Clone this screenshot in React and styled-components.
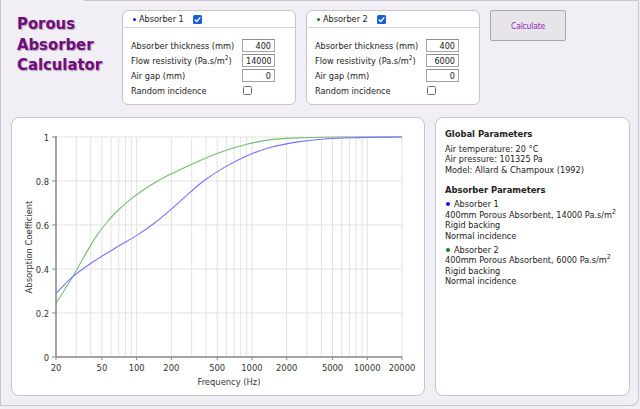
import React from "react";
import styled, { createGlobalStyle } from "styled-components";

const GlobalStyle = createGlobalStyle`
  html, body {
    margin: 0;
    padding: 0;
    background: #f2eef5;
  }
  body {
    font-family: "DejaVu Sans Condensed", "DejaVu Sans", sans-serif;
    font-stretch: condensed;
    color: #222;
  }
`;

const BLUE = "#7373ff";
const GREEN = "#74bb74";

// plot area inside the chart svg
const L = 44;
const R = 390;
const T = 19;
const B = 239;

const fx = (f) => L + ((Math.log10(f) - Math.log10(20)) / 3) * (R - L);
const ay = (a) => B - a * (B - T);

const blueData = [
  [20, 0.289], [27.9, 0.365], [40.2, 0.426], [68.5, 0.502], [102, 0.555],
  [142, 0.608], [199, 0.671], [296, 0.752], [386, 0.802], [576, 0.862],
  [918, 0.916], [1463, 0.953], [2500, 0.978], [4000, 0.99], [8000, 0.997],
  [20000, 1.0],
];

const greenData = [
  [20, 0.244], [27.9, 0.365], [35.2, 0.458], [44.5, 0.547], [54.3, 0.608],
  [64.1, 0.65], [83.6, 0.706], [102, 0.741], [152, 0.8], [212, 0.839],
  [296, 0.874], [504, 0.926], [918, 0.968], [1463, 0.988], [2500, 0.996],
  [4000, 0.999], [6000, 1.0], [20000, 1.0],
];

function monotonePath(data) {
  const pts = data.map(([f, a]) => [fx(f), ay(a)]);
  const n = pts.length;
  const m = [];
  for (let i = 0; i < n - 1; i++) {
    m.push((pts[i + 1][1] - pts[i][1]) / (pts[i + 1][0] - pts[i][0]));
  }
  const t = [m[0]];
  for (let i = 1; i < n - 1; i++) {
    t.push(m[i - 1] * m[i] <= 0 ? 0 : (m[i - 1] + m[i]) / 2);
  }
  t.push(m[n - 2]);
  for (let i = 0; i < n - 1; i++) {
    if (m[i] === 0) {
      t[i] = 0;
      t[i + 1] = 0;
      continue;
    }
    const a = t[i] / m[i];
    const b = t[i + 1] / m[i];
    const s = a * a + b * b;
    if (s > 9) {
      const k = 3 / Math.sqrt(s);
      t[i] = k * a * m[i];
      t[i + 1] = k * b * m[i];
    }
  }
  let d = `M${pts[0][0].toFixed(2)},${pts[0][1].toFixed(2)}`;
  for (let i = 0; i < n - 1; i++) {
    const [x0, y0] = pts[i];
    const [x1, y1] = pts[i + 1];
    const h = (x1 - x0) / 3;
    d += ` C${(x0 + h).toFixed(2)},${(y0 + t[i] * h).toFixed(2)} ${(x1 - h).toFixed(2)},${(y1 - t[i + 1] * h).toFixed(2)} ${x1.toFixed(2)},${y1.toFixed(2)}`;
  }
  return d;
}

const gridFreqs = [];
[10, 100, 1000, 10000].forEach((dec) => {
  for (let k = 1; k <= 9; k++) {
    const f = dec * k;
    if (f >= 20 && f <= 20000) gridFreqs.push(f);
  }
});
const xLabels = [20, 50, 100, 200, 500, 1000, 2000, 5000, 10000, 20000];
const yLabels = [
  [0, "0"], [0.2, "0.2"], [0.4, "0.4"], [0.6, "0.6"], [0.8, "0.8"], [1, "1"],
];

const absorbers = [
  { name: "Absorber 1", color: "#1010f0", thickness: "400", flow: "14000", gap: "0" },
  { name: "Absorber 2", color: "#108010", thickness: "400", flow: "6000", gap: "0" },
];

function Check() {
  return (
    <BlueCheck>
      <svg width="9" height="9" viewBox="0 0 9 9">
        <path d="M1.8 4.6 L3.7 6.4 L7.3 2.4" fill="none" stroke="#fff" strokeWidth="1.4" />
      </svg>
    </BlueCheck>
  );
}

function AbsorberBox({ item }) {
  return (
    <Box>
      <BoxHeader>
        <Dot $color={item.color} />
        <span>{item.name}</span>
        <Check />
      </BoxHeader>
      <BoxBody>
        <Label>Absorber thickness (mm)</Label>
        <NumInput readOnly value={item.thickness} />
        <Label>
          Flow resistivity (Pa.s/m<Sup>2</Sup>)
        </Label>
        <NumInput readOnly value={item.flow} />
        <Label>Air gap (mm)</Label>
        <NumInput readOnly value={item.gap} />
        <Label>Random incidence</Label>
        <EmptyCheck />
      </BoxBody>
    </Box>
  );
}

function Chart() {
  return (
    <svg width="412" height="277" viewBox="0 0 412 277">
      {gridFreqs.map((f) => (
        <line key={f} x1={fx(f)} x2={fx(f)} y1={T} y2={B} stroke="#e2e2e2" strokeWidth="1" />
      ))}
      {yLabels.map(([a]) => (
        <line key={a} x1={L} x2={R} y1={ay(a)} y2={ay(a)} stroke="#e2e2e2" strokeWidth="1" />
      ))}
      <path d={monotonePath(greenData)} fill="none" stroke={GREEN} strokeWidth="1.1" />
      <path d={monotonePath(blueData)} fill="none" stroke={BLUE} strokeWidth="1.1" />
      <line x1={L} x2={L} y1={T - 1} y2={B} stroke="#8a8a8a" strokeWidth="1.5" />
      <line x1={L} x2={R} y1={B} y2={B} stroke="#8a8a8a" strokeWidth="1.5" />
      {yLabels.map(([a, txt]) => (
        <g key={txt}>
          <line x1={L - 4} x2={L} y1={ay(a)} y2={ay(a)} stroke="#8a8a8a" />
          <AxisText x={L - 7} y={ay(a) + 3.5} textAnchor="end">
            {txt}
          </AxisText>
        </g>
      ))}
      {xLabels.map((f) => (
        <g key={f}>
          <line x1={fx(f)} x2={fx(f)} y1={B} y2={B + 3} stroke="#8a8a8a" />
          <AxisText x={fx(f)} y={B + 14} textAnchor="middle">
            {f}
          </AxisText>
        </g>
      ))}
      <AxisText x={(L + R) / 2} y={B + 28} textAnchor="middle">
        Frequency (Hz)
      </AxisText>
      <AxisText x={20} y={(T + B) / 2} textAnchor="middle" transform={`rotate(-90 20 ${(T + B) / 2})`}>
        Absorption Coefficient
      </AxisText>
    </svg>
  );
}

export default function App() {
  return (
    <>
      <GlobalStyle />
      <Frame>
        <TopRow>
          <Title>
            Porous
            <br />
            Absorber
            <br />
            Calculator
          </Title>
          {absorbers.map((item) => (
            <AbsorberBox key={item.name} item={item} />
          ))}
          <CalcButton>Calculate</CalcButton>
        </TopRow>
        <BottomRow>
          <ChartPanel>
            <Chart />
          </ChartPanel>
          <InfoPanel>
            <InfoHeading>Global Parameters</InfoHeading>
            <InfoBlock $space={9.5}>
              <div>Air temperature: 20 °C</div>
              <div>Air pressure: 101325 Pa</div>
              <div>Model: Allard &amp; Champoux (1992)</div>
            </InfoBlock>
            <InfoHeading>Absorber Parameters</InfoHeading>
            {absorbers.map((item) => (
              <InfoBlock key={item.name} $space={3.5}>
                <div>
                  <InfoDot $color={item.color} />
                  {item.name}
                </div>
                <div>
                  {item.thickness}mm Porous Absorbent, {item.flow} Pa.s/m<InfoSup>2</InfoSup>
                </div>
                <div>Rigid backing</div>
                <div>Normal incidence</div>
              </InfoBlock>
            ))}
          </InfoPanel>
        </BottomRow>
      </Frame>
    </>
  );
}

const Frame = styled.div`
  box-sizing: border-box;
  width: 639px;
  height: 406px;
  background: #f2eef5 linear-gradient(#c9c5cd, #c9c5cd) 83px 0 / 100% 1px no-repeat;
  border: 1px solid #c9c5cd;
  border-top: none;
  border-radius: 0 0 8px 0;
  display: flex;
  flex-direction: column;
  gap: 12px;
  padding: 10px 8px 9px 10px;
`;

const TopRow = styled.div`
  display: flex;
  align-items: flex-start;
  gap: 10px;
  height: 95px;
`;

const Title = styled.div`
  width: 95px;
  padding: 4px 0 0 6px;
  font-family: "DejaVu Sans Condensed", "DejaVu Sans", sans-serif;
  font-stretch: condensed;
  font-weight: bold;
  font-size: 16.5px;
  line-height: 20.5px;
  color: #700c80;
  text-shadow: 1px 1px 1px #a9a3ad;
`;

const Box = styled.div`
  box-sizing: border-box;
  width: 174px;
  height: 95px;
  background: #fff;
  border: 1px solid #c6c6c6;
  border-radius: 6px;
`;

const BoxHeader = styled.div`
  height: 16px;
  display: flex;
  align-items: center;
  padding-left: 10px;
  border-bottom: 1px solid #d4d4d4;
  font-size: 9.1px;
  span {
    margin-left: 3px;
    margin-right: 6px;
  }
`;

const Dot = styled.i`
  width: 3px;
  height: 3px;
  border-radius: 50%;
  background: ${(p) => p.$color};
`;

const BlueCheck = styled.span`
  display: inline-flex;
  width: 9px;
  height: 9px;
  border-radius: 1.5px;
  background: #1660d6;
  svg {
    display: block;
  }
`;

const EmptyCheck = styled.span`
  box-sizing: border-box;
  width: 9px;
  height: 9px;
  margin-left: 1px;
  border: 1px solid #6f6f6f;
  border-radius: 1.5px;
  background: #fff;
`;

const BoxBody = styled.div`
  display: grid;
  grid-template-columns: 111px 33px;
  grid-auto-rows: 15px;
  align-items: center;
  padding: 10px 0 0 8px;
`;

const Label = styled.div`
  font-size: 9.1px;
  white-space: nowrap;
`;

const Sup = styled.sup`
  font-size: 6.5px;
  line-height: 0;
`;

const NumInput = styled.input`
  box-sizing: border-box;
  width: 33px;
  height: 13px;
  padding: 0 3px;
  border: 1px solid #a3a3a3;
  border-top-color: #8c8c8c;
  background: #fff;
  font-family: "DejaVu Sans Condensed", "DejaVu Sans", sans-serif;
  font-stretch: condensed;
  font-size: 9px;
  color: #222;
  text-align: right;
  outline: none;
`;

const CalcButton = styled.button`
  box-sizing: border-box;
  width: 76px;
  height: 31px;
  background: #e7e5ea;
  border: 1px solid #a9a7ac;
  border-radius: 2px;
  color: #9227b3;
  font-family: "DejaVu Sans Condensed", "DejaVu Sans", sans-serif;
  font-stretch: condensed;
  font-size: 8.5px;
  letter-spacing: -0.2px;
`;

const BottomRow = styled.div`
  display: flex;
  gap: 10px;
  height: 279px;
`;

const ChartPanel = styled.div`
  box-sizing: border-box;
  width: 414px;
  height: 279px;
  background: #fff;
  border: 1px solid #c6c6c6;
  border-radius: 8px;
  svg {
    display: block;
  }
`;

const AxisText = styled.text`
  font-family: "DejaVu Sans Condensed", "DejaVu Sans", sans-serif;
  font-stretch: condensed;
  font-size: 9.3px;
  fill: #333;
`;

const InfoPanel = styled.div`
  box-sizing: border-box;
  width: 196px;
  height: 279px;
  background: #fff;
  border: 1px solid #c6c6c6;
  border-radius: 8px;
  padding: 11px 6px 9px 9px;
  font-size: 9.1px;
  line-height: 10.5px;
  white-space: nowrap;
`;

const InfoHeading = styled.div`
  font-weight: bold;
  font-size: 9.3px;
  margin-bottom: 4px;
`;

const InfoBlock = styled.div`
  margin-bottom: ${(p) => p.$space}px;
`;

const InfoDot = styled.i`
  display: inline-block;
  width: 4px;
  height: 4px;
  border-radius: 50%;
  background: ${(p) => p.$color};
  margin: 0 4px 1px 1px;
  vertical-align: middle;
`;

const InfoSup = styled.sup`
  font-size: 7px;
  line-height: 0;
`;
